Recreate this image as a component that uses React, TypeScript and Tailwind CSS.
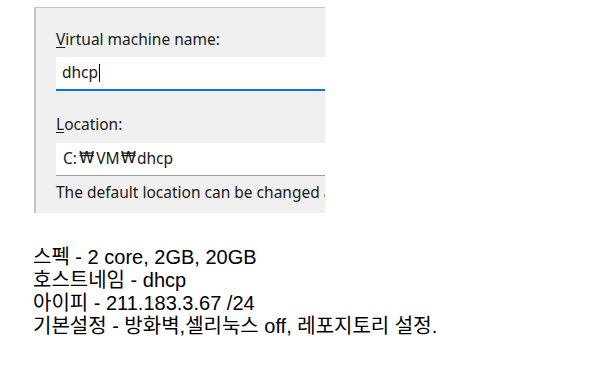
import React from "react";

const dialogFont = { fontFamily: '"Noto Sans", "Segoe UI", sans-serif' };
const won = { fontFamily: '"DejaVu Sans", "Noto Sans CJK KR", sans-serif' };

const App = () => {
  return (
    <div className="w-[596px] h-[372px] bg-white overflow-hidden">
      {/* Dialog crop */}
      <div className="pt-[7px] pl-[34px]">
        <div
          className="w-[291px] h-[206px] bg-[#f0f0f0] border-t border-l-2 border-[#c4c4c4] pl-[20px] pt-[21px] overflow-hidden"
          style={dialogFont}
        >
          <div className="text-[15.5px] leading-[21px] text-[#1a1a1a] whitespace-nowrap">
            <span className="underline underline-offset-2">V</span>irtual machine name:
          </div>
          <div className="mt-[7px] h-[34px] bg-white border-b-2 border-[#0078d7] flex items-center pl-[6px] text-[15.5px] text-[#1a1a1a]">
            dhcp
            <span className="inline-block w-px h-[18px] bg-black ml-px" />
          </div>
          <div className="mt-[23px] text-[15.5px] leading-[21px] text-[#1a1a1a] whitespace-nowrap">
            <span className="underline underline-offset-2">L</span>ocation:
          </div>
          <div className="mt-[8px] h-[33px] bg-white border-b border-[#a0a0a0] flex items-center pl-[7px] text-[15.5px] text-[#1a1a1a] whitespace-nowrap">
            C:<span className="px-[2px]" style={won}>₩</span>VM<span className="px-[1px]" style={won}>₩</span>dhcp
          </div>
          <div className="mt-[6px] text-[15.5px] leading-[21px] text-[#1a1a1a] whitespace-nowrap">
            The default location can be changed at any time.
          </div>
        </div>
      </div>

      {/* Notes */}
      <div
        className="mt-[33px] pl-[33px] text-[20px] leading-[23px] text-black"
        style={{ fontFamily: '"Liberation Sans", "Noto Sans CJK KR", sans-serif' }}
      >
        <p>스펙 - 2 core, 2GB, 20GB</p>
        <p>호스트네임 - dhcp</p>
        <p>아이피 - 211.183.3.67 /24</p>
        <p>기본설정 - 방화벽,셀리눅스 off, 레포지토리 설정.</p>
      </div>
    </div>
  );
};

export default App;
